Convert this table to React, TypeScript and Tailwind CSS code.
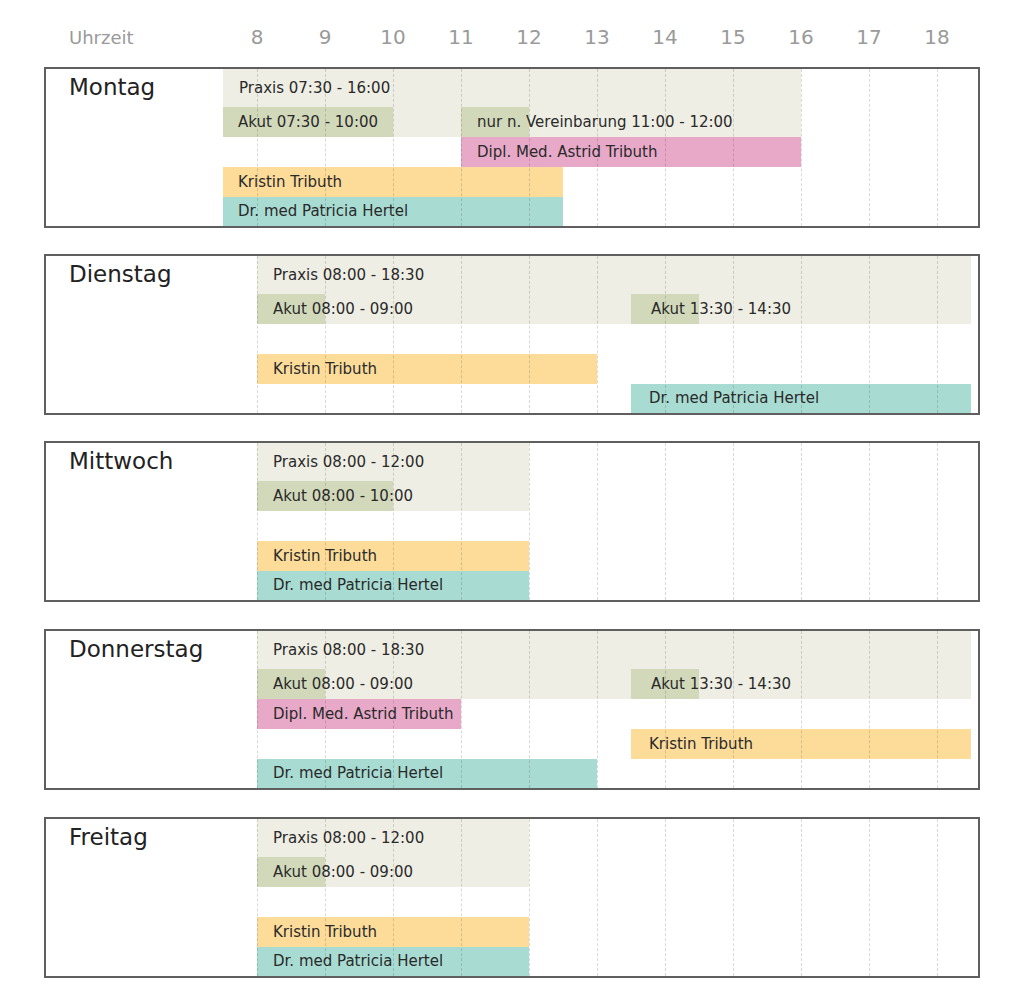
import React from "react";

type Bar = { row: number; from: number; to: number; color: string; text?: string; pl?: number };
type Day = { name: string; praxis: [number, number]; praxisText: string; bars: Bar[]; mt: string };

const AKUT = "bg-[#d2d9bb]";
const PINK = "bg-[#e8a9c9]";
const YELLOW = "bg-[#fddc9a]";
const TEAL = "bg-[#a8dcd3]";

const days: Day[] = [
  {
    name: "Montag",
    praxis: [7.5, 16],
    praxisText: "Praxis 07:30 - 16:00",
    mt: "mt-[14px]",
    bars: [
      { row: 2, from: 7.5, to: 10, color: AKUT, text: "Akut 07:30 - 10:00", pl: 15 },
      { row: 2, from: 11, to: 12, color: AKUT, text: "nur n. Vereinbarung 11:00 - 12:00" },
      { row: 3, from: 11, to: 16, color: PINK, text: "Dipl. Med. Astrid Tributh" },
      { row: 4, from: 7.5, to: 12.5, color: YELLOW, text: "Kristin Tributh", pl: 15 },
      { row: 5, from: 7.5, to: 12.5, color: TEAL, text: "Dr. med Patricia Hertel", pl: 15 },
    ],
  },
  {
    name: "Dienstag",
    praxis: [8, 18.5],
    praxisText: "Praxis 08:00 - 18:30",
    mt: "mt-[26px]",
    bars: [
      { row: 2, from: 8, to: 9, color: AKUT, text: "Akut 08:00 - 09:00" },
      { row: 2, from: 13.5, to: 14.5, color: AKUT, text: "Akut 13:30 - 14:30", pl: 20 },
      { row: 4, from: 8, to: 13, color: YELLOW, text: "Kristin Tributh" },
      { row: 5, from: 13.5, to: 18.5, color: TEAL, text: "Dr. med Patricia Hertel", pl: 18 },
    ],
  },
  {
    name: "Mittwoch",
    praxis: [8, 12],
    praxisText: "Praxis 08:00 - 12:00",
    mt: "mt-[26px]",
    bars: [
      { row: 2, from: 8, to: 10, color: AKUT, text: "Akut 08:00 - 10:00" },
      { row: 4, from: 8, to: 12, color: YELLOW, text: "Kristin Tributh" },
      { row: 5, from: 8, to: 12, color: TEAL, text: "Dr. med Patricia Hertel" },
    ],
  },
  {
    name: "Donnerstag",
    praxis: [8, 18.5],
    praxisText: "Praxis 08:00 - 18:30",
    mt: "mt-[27px]",
    bars: [
      { row: 2, from: 8, to: 9, color: AKUT, text: "Akut 08:00 - 09:00" },
      { row: 2, from: 13.5, to: 14.5, color: AKUT, text: "Akut 13:30 - 14:30", pl: 20 },
      { row: 3, from: 8, to: 11, color: PINK, text: "Dipl. Med. Astrid Tributh" },
      { row: 4, from: 13.5, to: 18.5, color: YELLOW, text: "Kristin Tributh", pl: 18 },
      { row: 5, from: 8, to: 13, color: TEAL, text: "Dr. med Patricia Hertel" },
    ],
  },
  {
    name: "Freitag",
    praxis: [8, 12],
    praxisText: "Praxis 08:00 - 12:00",
    mt: "mt-[27px]",
    bars: [
      { row: 2, from: 8, to: 9, color: AKUT, text: "Akut 08:00 - 09:00" },
      { row: 4, from: 8, to: 12, color: YELLOW, text: "Kristin Tributh" },
      { row: 5, from: 8, to: 12, color: TEAL, text: "Dr. med Patricia Hertel" },
    ],
  },
];

const hours = [8, 9, 10, 11, 12, 13, 14, 15, 16, 17, 18];
const col = (h: number) => Math.round((h - 7.5) * 2) + 1;
const FONT = { fontFamily: '"DejaVu Sans", Verdana, sans-serif' };

function DayBox({ day }: { day: Day }) {
  return (
    <div className={`${day.mt} flex w-[936px] border-2 border-[#5f5f5f] bg-white`}>
      <div className="w-[177px] shrink-0 pl-[23px] pt-[3px] text-[23px] leading-[30px] text-[#222]">{day.name}</div>
      <div className="relative grid grid-cols-[repeat(22,34px)_1fr] grid-rows-[38px_30px_30px_30px_29px] flex-1 text-[15px] text-[#2a2a2a]">
        <div
          className="row-start-1 row-end-3 bg-[#eeeee4]"
          style={{ gridColumn: `${col(day.praxis[0])} / ${col(day.praxis[1])}` }}
        />
        <div
          className="row-start-1 flex items-center whitespace-nowrap pl-[16px]"
          style={{ gridColumn: `${col(day.praxis[0])} / ${col(day.praxis[1])}` }}
        >
          {day.praxisText}
        </div>
        {day.bars.map((b, i) => (
          <div
            key={i}
            className={`${b.color} flex items-center whitespace-nowrap overflow-visible`}
            style={{
              gridColumn: `${col(b.from)} / ${col(b.to)}`,
              gridRow: `${b.row} / span 1`,
              paddingLeft: `${b.pl ?? 16}px`,
            }}
          >
            {b.text}
          </div>
        ))}
        {hours.map((h) => (
          <div
            key={h}
            className="pointer-events-none border-l border-dashed border-[#00000026]"
            style={{ gridColumn: `${col(h)} / span 1`, gridRow: "1 / -1" }}
          />
        ))}
      </div>
    </div>
  );
}

export default function App() {
  return (
    <div className="min-h-[1007px] w-[1024px] bg-white pl-[44px] pt-[21px]" style={FONT}>
      <div className="flex h-[32px] w-[936px] items-center">
        <div className="w-[179px] shrink-0 pl-[25px] text-[18px] text-[#9a9a9a]">Uhrzeit</div>
        <div className="grid flex-1 grid-cols-[repeat(22,34px)_1fr] text-[20px] text-[#9a9a9a]">
          {hours.map((h) => (
            <div key={h} className="text-center" style={{ gridColumn: `${(h - 8) * 2 + 1} / span 2` }}>
              {h}
            </div>
          ))}
        </div>
      </div>
      {days.map((d) => (
        <DayBox key={d.name} day={d} />
      ))}
    </div>
  );
}
